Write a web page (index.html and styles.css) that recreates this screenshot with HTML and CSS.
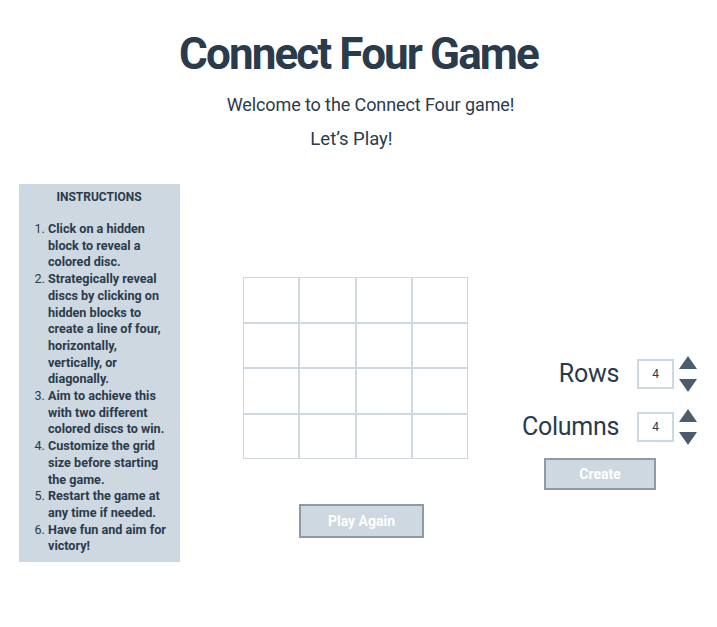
FILE: index.html
```html
<!DOCTYPE html>
<html lang="en">
<head>
<meta charset="utf-8">
<title>Connect Four Game</title>
<link rel="stylesheet" href="styles.css">
</head>
<body>
<header class="top">
  <h1 class="title">Connect Four Game</h1>
  <p class="welcome">Welcome to the Connect Four game!</p>
  <p class="lets">Let’s Play!</p>
</header>
<main class="main">
  <aside class="panel">
    <h2 class="panel-title">INSTRUCTIONS</h2>
    <ol class="steps">
      <li>Click on a hidden block to reveal a colored disc.</li>
      <li>Strategically reveal discs by clicking on hidden blocks to create a line of four, horizontally, vertically, or diagonally.</li>
      <li>Aim to achieve this with two different colored discs to win.</li>
      <li>Customize the grid size before starting the game.</li>
      <li>Restart the game at any time if needed.</li>
      <li>Have fun and aim for victory!</li>
    </ol>
  </aside>
  <section class="board-col">
    <div class="board">
      <div class="cell"></div><div class="cell"></div><div class="cell"></div><div class="cell"></div>
      <div class="cell"></div><div class="cell"></div><div class="cell"></div><div class="cell"></div>
      <div class="cell"></div><div class="cell"></div><div class="cell"></div><div class="cell"></div>
      <div class="cell"></div><div class="cell"></div><div class="cell"></div><div class="cell"></div>
    </div>
    <button class="btn btn-play">Play Again</button>
  </section>
  <section class="controls">
    <div class="ctrl-row">
      <span class="ctrl-label">Rows</span>
      <span class="num">4</span>
      <span class="arrows"><span class="up"></span><span class="down"></span></span>
    </div>
    <div class="ctrl-row ctrl-row2">
      <span class="ctrl-label">Columns</span>
      <span class="num">4</span>
      <span class="arrows"><span class="up"></span><span class="down"></span></span>
    </div>
    <button class="btn btn-create">Create</button>
  </section>
</main>
</body>
</html>
```
FILE: styles.css
```css
* { box-sizing: border-box; }
body {
  margin: 0;
  font-family: Roboto, "Liberation Sans", sans-serif;
  color: #2a3b4c;
  background: #fff;
}
.top { text-align: center; }
.title {
  margin: 0;
  padding-top: 28px;
  font-size: 44px;
  line-height: 52px;
  font-weight: 700;
  letter-spacing: -1.9px;
}
.welcome {
  margin: 13px 0 0;
  padding-left: 24px;
  font-size: 18px;
  line-height: 24px;
  letter-spacing: -0.1px;
}
.lets {
  margin: 10px 0 0;
  padding-right: 14px;
  font-size: 18.5px;
  line-height: 24px;
}
.main {
  display: flex;
  align-items: flex-start;
  margin-top: 33px;
}
.panel {
  margin-left: 19px;
  width: 161px;
  background: #cdd8e0;
  padding: 5px 13px 7px 12px;
}
.panel-title {
  margin: 0;
  text-align: center;
  font-size: 12px;
  line-height: 17px;
  font-weight: 700;
}
.steps {
  margin: 15px 0 0;
  padding-left: 17px;
  font-size: 12.6px;
  line-height: 16.7px;
  font-weight: 700;
  letter-spacing: 0;
}
.steps li::marker { font-weight: 400; }
.board-col {
  margin-left: 63px;
  padding-top: 93px;
  display: flex;
  flex-direction: column;
  align-items: flex-start;
}
.board {
  display: grid;
  grid-template-columns: repeat(4, 56.25px);
  grid-template-rows: repeat(4, 45.5px);
}
.cell {
  border: 1px solid #cfd8df;
}
.btn {
  font-family: inherit;
  font-weight: 700;
  font-size: 14px;
  color: #fff;
  background: #cdd8e0;
  border: 2px solid #8e9ba7;
  padding: 0;
}
.btn-play {
  margin-top: 45px;
  margin-left: 56px;
  width: 125px;
  height: 34px;
}
.controls {
  margin-left: 17px;
  padding-top: 172px;
  width: 231px;
  display: flex;
  flex-direction: column;
}
.ctrl-row {
  display: grid;
  grid-template-columns: 134px 37px 19px;
  column-gap: 18px;
  align-items: center;
}
.ctrl-row .arrows { margin-left: -13px; }
.ctrl-row2 { margin-top: 17px; }
.ctrl-label {
  text-align: right;
  font-size: 25px;
  line-height: 30px;
  letter-spacing: -0.3px;
}
.num {
  height: 30px;
  border: 2px solid #cdd8e0;
  font-size: 12px;
  line-height: 26px;
  text-align: center;
}
.arrows {
  display: flex;
  flex-direction: column;
  gap: 10px;
  width: 19px;
}
.up, .down {
  width: 0;
  height: 0;
  border-left: 9.5px solid transparent;
  border-right: 9.5px solid transparent;
}
.up { border-bottom: 13px solid #4b5d6d; }
.down { border-top: 13px solid #4b5d6d; }
.btn-create {
  margin-top: 13px;
  margin-left: 59px;
  width: 112px;
  height: 32px;
}
```
